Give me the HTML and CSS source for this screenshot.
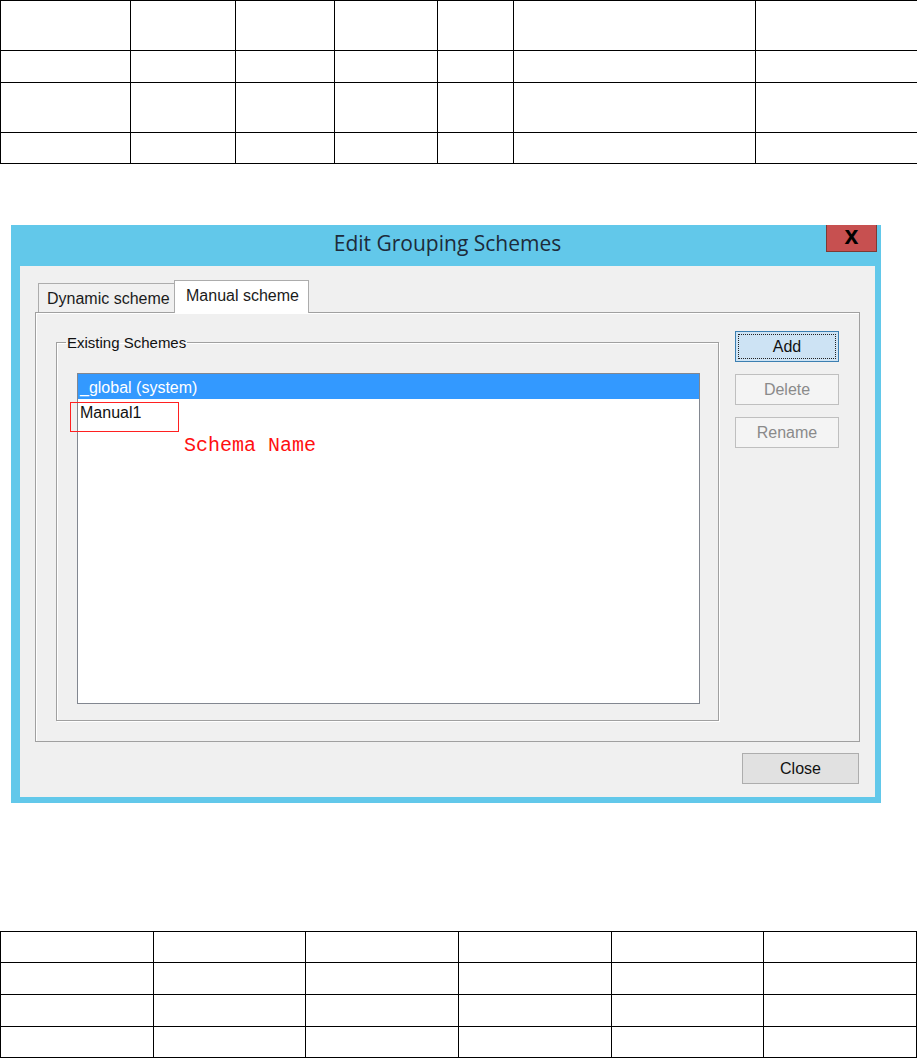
FILE: index.html
```html
<!DOCTYPE html>
<html lang="en">
<head>
    <meta charset="UTF-8">
    <title>Edit Grouping Schemes</title>
    <link rel="stylesheet" href="styles.css">
</head>
<body>

<table class="grid grid-top">
    <colgroup>
        <col style="width:130px">
        <col style="width:105px">
        <col style="width:99px">
        <col style="width:103px">
        <col style="width:76px">
        <col style="width:242px">
        <col style="width:162px">
    </colgroup>
    <tr class="tall"><td></td><td></td><td></td><td></td><td></td><td></td><td></td></tr>
    <tr class="short"><td></td><td></td><td></td><td></td><td></td><td></td><td></td></tr>
    <tr class="tall"><td></td><td></td><td></td><td></td><td></td><td></td><td></td></tr>
    <tr class="last"><td></td><td></td><td></td><td></td><td></td><td></td><td></td></tr>
</table>

<div class="window">
    <div class="titlebar">
        <span class="title">Edit Grouping Schemes</span>
        <div class="close-x">x</div>
    </div>
    <div class="client">
        <div class="tabstrip">
            <div class="tab">Dynamic scheme</div>
            <div class="tab active">Manual scheme</div>
        </div>
        <div class="tabpanel">
            <fieldset class="group">
                <legend>Existing Schemes</legend>
                <div class="listbox">
                    <div class="item selected">_global (system)</div>
                    <div class="item">Manual1</div>
                    <div class="mark"></div>
                    <div class="mark-label">Schema Name</div>
                </div>
            </fieldset>
            <div class="side-buttons">
                <button class="btn default">Add</button>
                <button class="btn" disabled>Delete</button>
                <button class="btn" disabled>Rename</button>
            </div>
        </div>
        <div class="footer">
            <button class="btn close">Close</button>
        </div>
    </div>
</div>

<table class="grid grid-bottom">
    <tr class="r30"><td></td><td></td><td></td><td></td><td></td><td></td></tr>
    <tr><td></td><td></td><td></td><td></td><td></td><td></td></tr>
    <tr><td></td><td></td><td></td><td></td><td></td><td></td></tr>
    <tr class="r30"><td></td><td></td><td></td><td></td><td></td><td></td></tr>
</table>

</body>
</html>
```

FILE: styles.css
```css
body {
    margin: 0;
    background: #fff;
    font-family: "Liberation Sans", Arial, sans-serif;
    font-size: 16px;
    color: #000;
}

/* empty document tables */
.grid {
    border-collapse: collapse;
    table-layout: fixed;
    width: 917px;
}
.grid td {
    border: 1px solid #000;
    padding: 0;
}
.grid-top .tall td {
    height: 49px;
}
.grid-top .short td {
    height: 31px;
}
.grid-top .last td {
    height: 30px;
}
.grid-bottom {
    margin-top: 128px;
}
.grid-bottom td {
    height: 31px;
}
.grid-bottom .r30 td {
    height: 30px;
}

/* dialog window */
.window {
    margin: 61px 0 0 11px;
    width: 870px;
    height: 578px;
    background: #62c8ea;
    padding: 0 6px 6px 9px;
    box-sizing: border-box;
    display: flex;
    flex-direction: column;
}
.titlebar {
    height: 42px;
    display: flex;
    justify-content: center;
    align-items: center;
    position: relative;
    padding-bottom: 5px;
    box-sizing: border-box;
}
.title {
    font-family: "Open Sans", "Noto Sans", sans-serif;
    font-size: 21px;
    color: #1d2b3a;
}
.close-x {
    position: absolute;
    top: 0;
    right: -2px;
    width: 49px;
    height: 26px;
    background: #c75050;
    border: 1px solid #7d3a34;
    border-top: none;
    color: #000;
    font-weight: bold;
    font-size: 25px;
    line-height: 20px;
    text-align: center;
}
.client {
    flex: 1;
    background: #f0f0f0;
    padding: 14px 15px 13px 15px;
    display: flex;
    flex-direction: column;
}

/* tabs */
.tabstrip {
    height: 32px;
    display: flex;
    align-items: flex-end;
    padding-left: 3px;
}
.tab {
    height: 29px;
    box-sizing: border-box;
    border: 1px solid #acacac;
    border-bottom: none;
    background: #f0f0f0;
    padding: 6px 0 0 8px;
    width: 137px;
    color: #1b1b1b;
}
.tab.active {
    height: 33px;
    width: 135px;
    margin-left: -1px;
    margin-bottom: -1px;
    padding: 6px 0 0 11px;
    background: #fff;
    position: relative;
    z-index: 1;
}
.tabpanel {
    flex: 1;
    border: 1px solid #a0a0a0;
    box-shadow: inset 1px 1px #fff;
    display: flex;
    gap: 16px;
    padding: 18px 20px 20px 20px;
}

/* group box with list */
.group {
    flex: 1;
    margin: 1px 0 0 0;
    padding: 21px 18px 16px 20px;
    border: 1px solid #a0a0a0;
    box-shadow: inset 1px 1px #fff, 1px 1px #fff;
    min-width: 0;
}
.group legend {
    font-size: 15px;
    line-height: 18px;
    padding: 2px 1px 0 1px;
    margin-left: -11px;
    color: #111;
}
.listbox {
    height: 331px;
    box-sizing: border-box;
    border: 1px solid #828790;
    background: #fff;
    position: relative;
}
.item {
    height: 25px;
    box-sizing: border-box;
    padding: 3px 0 0 2px;
    line-height: 22px;
    color: #111;
}
.item.selected {
    background: #3399ff;
    color: #fff;
}
.mark {
    position: absolute;
    left: -8px;
    top: 28px;
    width: 109px;
    height: 30px;
    box-sizing: border-box;
    border: 1px solid #ff2020;
}
.mark-label {
    position: absolute;
    left: 106px;
    top: 62px;
    font-family: "Liberation Mono", monospace;
    font-size: 20px;
    line-height: 20px;
    color: #ff1010;
}

/* buttons */
.side-buttons {
    width: 104px;
    display: flex;
    flex-direction: column;
    gap: 12px;
}
.btn {
    font-family: "Liberation Sans", Arial, sans-serif;
    font-size: 16px;
    height: 31px;
    width: 104px;
    border: 1px solid #adadad;
    background: #e1e1e1;
    color: #111;
    padding: 0;
}
.btn.default {
    background: #cde3f4;
    border-color: #3c7fb1;
    outline: 1px dotted #222;
    outline-offset: -4px;
}
.btn:disabled {
    background: #f4f4f4;
    border-color: #bfbfbf;
    color: #8a8a8a;
}
.footer {
    display: flex;
    justify-content: flex-end;
    padding: 11px 1px 0 0;
}
.btn.close {
    width: 117px;
}
```
